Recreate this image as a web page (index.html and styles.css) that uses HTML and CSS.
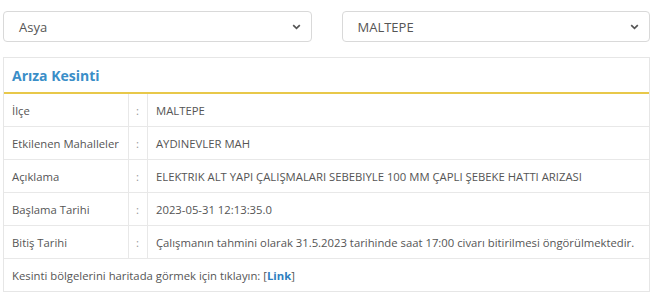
FILE: index.html
```html
<!DOCTYPE html>
<html lang="tr">
<head>
    <meta charset="UTF-8">
    <meta name="viewport" content="width=device-width, initial-scale=1.0">
    <title>Arıza Kesinti</title>
    <link rel="stylesheet" href="styles.css">
</head>
<body>
    <div class="filters">
        <div class="select-box">
            <span>Asya</span>
            <svg class="chevron" width="9" height="6" viewBox="0 0 9 6"><path d="M1.2 1.2 L4.5 4.4 L7.8 1.2" fill="none" stroke="#555" stroke-width="1.7"/></svg>
        </div>
        <div class="select-box">
            <span>MALTEPE</span>
            <svg class="chevron" width="9" height="6" viewBox="0 0 9 6"><path d="M1.2 1.2 L4.5 4.4 L7.8 1.2" fill="none" stroke="#555" stroke-width="1.7"/></svg>
        </div>
    </div>

    <div class="panel">
        <div class="panel-title">Arıza Kesinti</div>
        <table class="info-table">
            <tr>
                <td class="label">İlçe</td>
                <td class="colon">:</td>
                <td>MALTEPE</td>
            </tr>
            <tr>
                <td class="label">Etkilenen Mahalleler</td>
                <td class="colon">:</td>
                <td>AYDINEVLER MAH</td>
            </tr>
            <tr>
                <td class="label">Açıklama</td>
                <td class="colon">:</td>
                <td>ELEKTRIK ALT YAPI ÇALIŞMALARI SEBEBIYLE 100 MM ÇAPLI ŞEBEKE HATTI ARIZASI</td>
            </tr>
            <tr>
                <td class="label">Başlama Tarihi</td>
                <td class="colon">:</td>
                <td>2023-05-31 12:13:35.0</td>
            </tr>
            <tr>
                <td class="label">Bitiş Tarihi</td>
                <td class="colon">:</td>
                <td>Çalışmanın tahmini olarak 31.5.2023 tarihinde saat 17:00 civarı bitirilmesi öngörülmektedir.</td>
            </tr>
            <tr>
                <td colspan="3">Kesinti bölgelerini haritada görmek için tıklayın: [<a href="#" class="map-link">Link</a>]</td>
            </tr>
        </table>
    </div>
</body>
</html>
```

FILE: styles.css
```css
body {
    font-family: 'Open Sans', sans-serif;
    margin: 0;
    padding: 11px 10px 0 3px;
    background-color: #ffffff;
    color: #555555;
}
.filters {
    display: flex;
    gap: 30px;
    margin-bottom: 15px;
}
.select-box {
    width: 309px;
    height: 31px;
    box-sizing: border-box;
    border: 1px solid #d9d9d9;
    border-radius: 4px;
    display: flex;
    align-items: center;
    justify-content: space-between;
    padding: 0 10px 0 15px;
    font-size: 13px;
    color: #555555;
}
.chevron {
    display: block;
}
.panel {
    border: 1px solid #e6e6e6;
    width: 647px;
    box-sizing: border-box;
}
.panel-title {
    height: 36px;
    box-sizing: border-box;
    padding: 0 8px;
    display: flex;
    align-items: center;
    font-size: 14px;
    font-weight: bold;
    color: #3a8ec8;
    border-bottom: 2px solid #e8c84a;
}
.info-table {
    width: 100%;
    border-collapse: collapse;
    font-size: 11.3px;
}
.info-table td {
    height: 32px;
    padding: 0 8px;
    border-top: 1px solid #e8e8e8;
    vertical-align: middle;
    white-space: nowrap;
}
.info-table tr:first-child td {
    border-top: none;
}
.info-table td.label {
    width: 108px;
    border-right: 1px solid #e8e8e8;
}
.info-table td.colon {
    width: 2px;
    padding: 0 8px 0 7px;
    color: #999999;
    border-right: 1px solid #e8e8e8;
}
.map-link {
    color: #2f7fc0;
    font-weight: bold;
    text-decoration: none;
}
```
